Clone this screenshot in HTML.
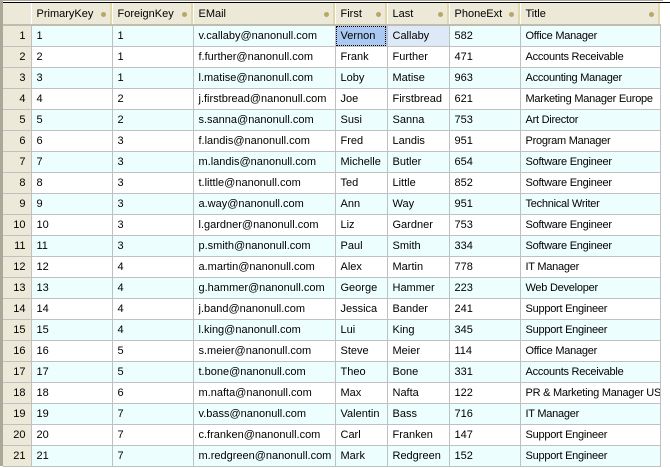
<!DOCTYPE html><html><head><style>
body{margin:0;width:670px;height:468px;background:#fff;overflow:hidden;font-family:"Liberation Sans",Arial,sans-serif;font-size:11px;color:#000;position:relative}
.frame{position:absolute;left:0;top:0;width:663px;height:466px;border-left:3px solid #aca899;border-top:1px solid #aca899;box-sizing:border-box}
.topline{position:absolute;left:3px;top:2px;width:667px;height:1px;background:#000}
table{position:absolute;left:3px;top:3px;border-collapse:collapse;table-layout:fixed;width:657px}
th{background:#ece9d8;height:21px;font-weight:normal;text-align:left;padding:0 0 0 5px;border-right:1px solid #fff;border-bottom:2px solid #c0bdb0;position:relative;white-space:nowrap;box-shadow:inset -2px 0 0 #e2d7a8}
th .d{position:absolute;right:6px;top:9px;width:5px;height:5px;border-radius:50%;background:#b8a768}
td{height:20px;line-height:20px;border-right:1px solid #c0c0c0;border-bottom:1px solid #c0c0c0;padding:0 0 0 5px;white-space:nowrap;overflow:hidden}
td.n{background:#ece9d8;text-align:right;padding:0 5px 0 0}
td.t{letter-spacing:-0.25px}
tr.o td{background:#edfeff}
tr.o td.n,tr td.n{background:#ece9d8}
td.sel{background:#a9c9f2!important;outline:1px dotted #000;outline-offset:-2px}
td.cur{background:#dde9f6!important}
</style></head><body>
<div class="frame"></div><div class="topline"></div>
<table>
<colgroup><col style="width:28px"><col style="width:81px"><col style="width:81px"><col style="width:142px"><col style="width:52px"><col style="width:62px"><col style="width:71px"><col style="width:140px"></colgroup>
<tr><th style="box-shadow:none;border-right:1px solid #fff"></th><th>PrimaryKey<span class="d"></span></th><th>ForeignKey<span class="d"></span></th><th>EMail<span class="d"></span></th><th>First<span class="d"></span></th><th>Last<span class="d"></span></th><th>PhoneExt<span class="d"></span></th><th>Title<span class="d"></span></th></tr>
<tr class="o"><td class="n">1</td><td>1</td><td>1</td><td>v.callaby@nanonull.com</td><td class="sel">Vernon</td><td class="cur">Callaby</td><td>582</td><td class="t">Office Manager</td></tr>
<tr><td class="n">2</td><td>2</td><td>1</td><td>f.further@nanonull.com</td><td>Frank</td><td>Further</td><td>471</td><td class="t">Accounts Receivable</td></tr>
<tr class="o"><td class="n">3</td><td>3</td><td>1</td><td>l.matise@nanonull.com</td><td>Loby</td><td>Matise</td><td>963</td><td class="t">Accounting Manager</td></tr>
<tr><td class="n">4</td><td>4</td><td>2</td><td>j.firstbread@nanonull.com</td><td>Joe</td><td>Firstbread</td><td>621</td><td class="t">Marketing Manager Europe</td></tr>
<tr class="o"><td class="n">5</td><td>5</td><td>2</td><td>s.sanna@nanonull.com</td><td>Susi</td><td>Sanna</td><td>753</td><td class="t">Art Director</td></tr>
<tr><td class="n">6</td><td>6</td><td>3</td><td>f.landis@nanonull.com</td><td>Fred</td><td>Landis</td><td>951</td><td class="t">Program Manager</td></tr>
<tr class="o"><td class="n">7</td><td>7</td><td>3</td><td>m.landis@nanonull.com</td><td>Michelle</td><td>Butler</td><td>654</td><td class="t">Software Engineer</td></tr>
<tr><td class="n">8</td><td>8</td><td>3</td><td>t.little@nanonull.com</td><td>Ted</td><td>Little</td><td>852</td><td class="t">Software Engineer</td></tr>
<tr class="o"><td class="n">9</td><td>9</td><td>3</td><td>a.way@nanonull.com</td><td>Ann</td><td>Way</td><td>951</td><td class="t">Technical Writer</td></tr>
<tr><td class="n">10</td><td>10</td><td>3</td><td>l.gardner@nanonull.com</td><td>Liz</td><td>Gardner</td><td>753</td><td class="t">Software Engineer</td></tr>
<tr class="o"><td class="n">11</td><td>11</td><td>3</td><td>p.smith@nanonull.com</td><td>Paul</td><td>Smith</td><td>334</td><td class="t">Software Engineer</td></tr>
<tr><td class="n">12</td><td>12</td><td>4</td><td>a.martin@nanonull.com</td><td>Alex</td><td>Martin</td><td>778</td><td class="t">IT Manager</td></tr>
<tr class="o"><td class="n">13</td><td>13</td><td>4</td><td>g.hammer@nanonull.com</td><td>George</td><td>Hammer</td><td>223</td><td class="t">Web Developer</td></tr>
<tr><td class="n">14</td><td>14</td><td>4</td><td>j.band@nanonull.com</td><td>Jessica</td><td>Bander</td><td>241</td><td class="t">Support Engineer</td></tr>
<tr class="o"><td class="n">15</td><td>15</td><td>4</td><td>l.king@nanonull.com</td><td>Lui</td><td>King</td><td>345</td><td class="t">Support Engineer</td></tr>
<tr><td class="n">16</td><td>16</td><td>5</td><td>s.meier@nanonull.com</td><td>Steve</td><td>Meier</td><td>114</td><td class="t">Office Manager</td></tr>
<tr class="o"><td class="n">17</td><td>17</td><td>5</td><td>t.bone@nanonull.com</td><td>Theo</td><td>Bone</td><td>331</td><td class="t">Accounts Receivable</td></tr>
<tr><td class="n">18</td><td>18</td><td>6</td><td>m.nafta@nanonull.com</td><td>Max</td><td>Nafta</td><td>122</td><td class="t">PR &amp; Marketing Manager US</td></tr>
<tr class="o"><td class="n">19</td><td>19</td><td>7</td><td>v.bass@nanonull.com</td><td>Valentin</td><td>Bass</td><td>716</td><td class="t">IT Manager</td></tr>
<tr><td class="n">20</td><td>20</td><td>7</td><td>c.franken@nanonull.com</td><td>Carl</td><td>Franken</td><td>147</td><td class="t">Support Engineer</td></tr>
<tr class="o"><td class="n">21</td><td>21</td><td>7</td><td>m.redgreen@nanonull.com</td><td>Mark</td><td>Redgreen</td><td>152</td><td class="t">Support Engineer</td></tr>
</table>
</body></html>
